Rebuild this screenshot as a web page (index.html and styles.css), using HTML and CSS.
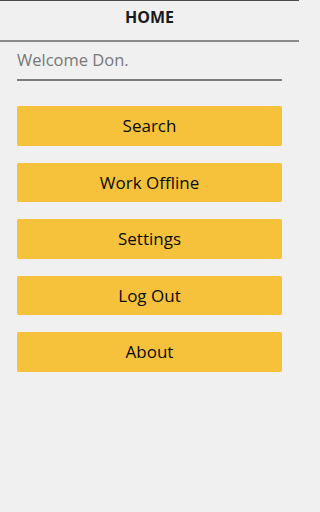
FILE: index.html
```html
<!DOCTYPE html>
<html>
<head>
<meta charset="utf-8">
<link rel="stylesheet" href="styles.css">
</head>
<body>
<div class="screen">
  <header class="bar">HOME</header>
  <div class="content">
    <div class="welcome">Welcome Don.</div>
    <nav class="menu">
      <button class="btn">Search</button>
      <button class="btn">Work Offline</button>
      <button class="btn">Settings</button>
      <button class="btn">Log Out</button>
      <button class="btn">About</button>
    </nav>
  </div>
</div>
</body>
</html>
```
FILE: styles.css
```css
html, body {
  margin: 0;
  padding: 0;
  background: #f0f0f0;
}
.screen {
  width: 299px;
  height: 512px;
  background: #f0f0f0;
  font-family: "Open Sans", "Noto Sans", sans-serif;
}
.bar {
  border-top: 1px solid #4a4a4a;
  padding: 6px 0 13px;
  line-height: 20px;
  text-align: center;
  font-weight: 700;
  font-size: 16px;
  color: #1a1a1a;
  background: #f0f0f0;
  border-bottom: 2px solid #8a8a8a;
}
.content {
  padding: 0 17px;
}
.welcome {
  padding: 6px 0 7px;
  line-height: 24px;
  font-size: 16.5px;
  color: #787878;
  border-bottom: 2px solid #7c7c7c;
}
.menu {
  margin-top: 25px;
  display: flex;
  flex-direction: column;
  gap: 17px;
}
.btn {
  height: 39.5px;
  border: none;
  border-radius: 2px;
  background: #f6c23b;
  font-family: "Open Sans", "Noto Sans", sans-serif;
  font-size: 17px;
  font-weight: 500;
  color: #0a0a0a;
  padding: 0;
  display: flex;
  align-items: center;
  justify-content: center;
}
```
